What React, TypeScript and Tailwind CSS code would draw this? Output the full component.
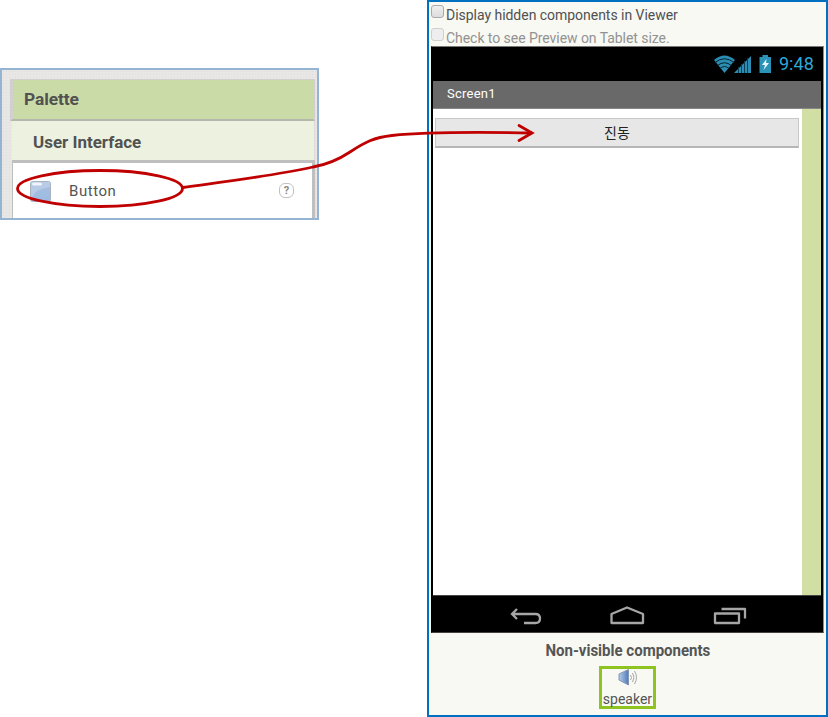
import React from "react";

function PalettePanel() {
  return (
    <section className="mt-[68px] flex h-[152px] w-[319px] shrink-0 flex-col border-2 border-[#95b3d3] bg-[#e8e7e6] bg-[radial-gradient(#dedddc_0.7px,transparent_0.9px)] bg-[size:3px_3px] pt-[9px] pr-0.5 pl-2">
      <div className="flex h-[42px] shrink-0 items-center border-t-[1.5px] border-r-2 border-b-2 border-l-[3px] border-[#d0d0d0] border-b-[#b4b8ac] bg-[#cbdba7] pb-0.5 pl-[11px] text-[17px] font-bold tracking-[-0.1px] text-[#515151]">
        <h2 className="origin-left scale-x-[1.02] leading-5">Palette</h2>
      </div>
      <div className="ml-0.5 flex h-[39px] shrink-0 items-center border-r border-[#dcdcdc] bg-[#edf1e0] pt-[3px] pl-[21px] text-[17px] font-bold text-[#515151]">
        <h3 className="origin-left scale-x-[0.997] leading-5 whitespace-nowrap">User Interface</h3>
      </div>
      <div className="ml-0.5 flex flex-1 items-start border-t-[3px] border-r-[3px] border-l border-[#bfbfbf] bg-white pt-[17px] pr-[18px] pl-[17px]">
        <svg className="mt-px h-[21px] w-[21px]" viewBox="0 0 21 21">
          <defs>
            <linearGradient id="tile" x2="0" y2="1">
              <stop stopColor="#a8bfdf" />
              <stop offset="1" stopColor="#9bbbe3" />
            </linearGradient>
          </defs>
          <rect x=".5" y=".5" width="20" height="20" rx="2" fill="url(#tile)" stroke="#a9b3c0" />
          <path d="M1 1H20V6Q6 7 1 18Z" fill="#c3d3e9" opacity=".65" />
          <rect x="2" y="1.5" width="10" height="3" rx="1.5" fill="#edf4fc" />
        </svg>
        <span className="mt-px ml-[18px] text-[15px] leading-[20px] tracking-[0.55px] text-[#555]">Button</span>
        <span className="mt-[3px] ml-auto flex h-[15px] w-[15px] items-center justify-center rounded-[6px] border-[1.5px] border-[#c1c1c1] text-[11px] leading-none font-bold text-[#888]">?</span>
      </div>
    </section>
  );
}

function StatusBar() {
  return (
    <div className="flex h-[34px] shrink-0 items-center justify-end bg-black pr-[9px]">
      <svg className="h-[20px] w-[60px]" viewBox="0 0 60 20">
        <path d="M1 6Q11.5-3 22 6L11.5 19Z" fill="#2b8db1" />
        <path d="M2 8.5Q11.5 1 21 8.5M4.5 11.5Q11.5 6 18.5 11.5M7 14.5Q11.5 10.5 16 14.5" fill="none" stroke="#06222e" strokeWidth="1" />
        <path d="M21 19L38 2V19Z" fill="#2b8db1" />
        <path d="M25.500 13V19M28.500 10V19M31.500 7V19M34.500 4V19" stroke="#0d3d50" strokeWidth="1" />
        <path d="M46.500 3H49.500V1H55V3H58V19H46.500Z" fill="#2b93b8" />
        <path d="M53.500 5L49 11H52L50.500 16L56 9H53Z" fill="#eaf7fb" />
      </svg>
      <span className="ml-[6px] text-[18px] leading-5 tracking-[0.1px] text-[#2da9d8]">9:48</span>
    </div>
  );
}

function NavigationBar() {
  return (
    <div className="h-[36px] shrink-0 bg-black">
      <svg className="h-full w-[390px]" viewBox="0 0 390 36" fill="none" stroke="#a6a6a6" strokeWidth="2.300">
        <path d="M85 13L80 18L85 23M81 18H103.500Q108 18 108 22.500T103.500 27H92" />
        <path d="M179.500 27V18L195 11.500L211 18V27Z" strokeLinejoin="round" />
        <path d="M283 17.500H307V27H283ZM289.500 13H313V22.500" strokeLinejoin="round" />
      </svg>
    </div>
  );
}

function Phone() {
  return (
    <div className="ml-0.5 flex h-[587px] w-[393px] shrink-0 flex-col border border-t-[#777] border-r-[#8d8d8d] border-b-[#45413c] border-l-black bg-black">
      <StatusBar />
      <div className="ml-px flex min-h-0 flex-1 flex-col">
        <div className="flex h-[28px] w-[388px] shrink-0 items-center border-b border-[#888] bg-[#696969] pb-0.5 pl-[14px] text-[13px] font-normal tracking-[0.25px] text-white">Screen1</div>
        <div className="flex min-h-0 w-[388px] flex-1 border-b border-[#444] bg-white">
          <div className="flex-1 pt-[9px] pl-0.5">
            <button className="flex h-[30px] w-[364px] items-center justify-center border border-b-2 border-[#c8c8c8] border-b-[#b6b6b6] bg-[#e7e7e7] pb-px font-['Noto_Sans_CJK_KR',sans-serif] text-[14px] leading-4 text-[#222]">진동</button>
          </div>
          <div className="w-[19px] bg-[#d1dfa5]" />
        </div>
      </div>
      <NavigationBar />
    </div>
  );
}

function Speaker() {
  return (
    <div className="flex h-[43px] w-[57px] flex-col items-center border-[3px] border-[#8fc31f]">
      <svg className="h-[17px] w-[20px] shrink-0" viewBox="0 0 20 17" fill="none">
        <defs>
          <linearGradient id="cone">
            <stop stopColor="#b7ccec" />
            <stop offset="1" stopColor="#5079b8" />
          </linearGradient>
        </defs>
        <path d="M1 5L10.500 .5V16L1 11Z" fill="url(#cone)" stroke="#8296b5" />
        <path d="M12.500 6Q14.500 8.500 12.500 11M14.500 4Q17.500 8.500 14.500 13M16.500 2Q20.500 8.500 16.500 15" stroke="#a6a6a6" />
      </svg>
      <span className="mt-[3px] text-[14px] leading-5 text-[#555]">speaker</span>
    </div>
  );
}

function ViewerPanel() {
  return (
    <section className="ml-[108px] flex h-[717px] w-[401px] shrink-0 flex-col border-2 border-[#0070c0] bg-[#f8f9f3]">
      <div className="h-[44px] shrink-0 pt-0.5 pl-0.5 text-[14px] leading-[23px]">
        <label className="flex h-[23px] items-start text-[#515151]">
          <span className="mt-px h-[13px] w-[13px] rounded-[3px] border border-[#aaa] bg-gradient-to-b from-[#eee] to-[#ddd]" />
          <span className="ml-0.5 tracking-[-0.03px]">Display hidden components in Viewer</span>
        </label>
        <label className="flex h-[19px] items-start text-[#929292]">
          <span className="mt-px h-[13px] w-[13px] rounded-[3px] border border-[#d0d0d0] bg-[#eee]" />
          <span className="ml-0.5 tracking-[-0.05px]">Check to see Preview on Tablet size.</span>
        </label>
      </div>
      <Phone />
      <div className="flex flex-1 flex-col items-center pt-2">
        <h2 className="scale-x-[0.938] text-[16px] leading-5 font-bold text-[#555]">Non-visible components</h2>
        <div className="mt-[5px]"><Speaker /></div>
      </div>
    </section>
  );
}

export default function App() {
  return (
    <main className="relative flex h-[717px] w-[828px] items-start overflow-hidden bg-white font-['Roboto','Liberation_Sans',sans-serif]">
      <PalettePanel />
      <ViewerPanel />
      <svg className="pointer-events-none absolute inset-0 h-[717px] w-[828px]" viewBox="0 0 828 717" fill="none" stroke="#c00000" strokeWidth="2.8">
        <ellipse cx="100" cy="188.500" rx="82.500" ry="18" />
        <path d="M183 187.500C230 181 272 176 313 167C330 164 341 158 350 152C365 142 374 137.500 392 135.500C430 131.500 480 132 532 133" />
        <path d="M519 125.500L532 133L519 140.500" strokeLinecap="round" />
      </svg>
    </main>
  );
}
